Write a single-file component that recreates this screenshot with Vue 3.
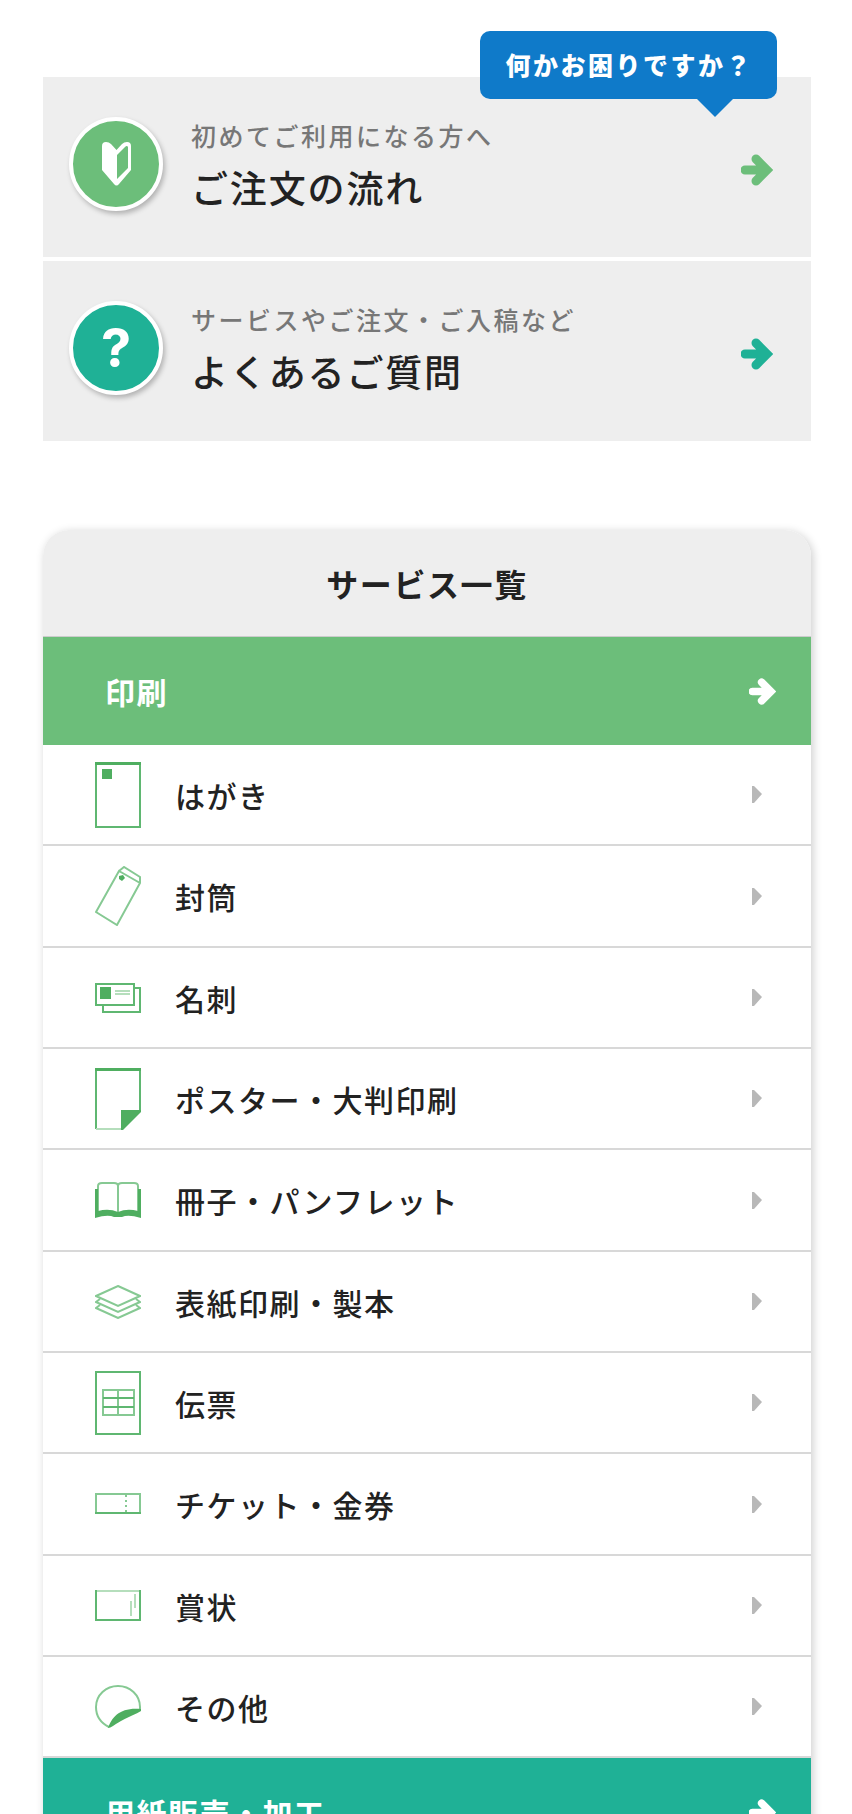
<script setup>
const guides = [
  { kind: 'beginner', lead: '初めてご利用になる方へ', title: 'ご注文の流れ' },
  { kind: 'faq', lead: 'サービスやご注文・ご入稿など', title: 'よくあるご質問' },
]

const services = [
  {
    name: 'はがき', w: 46, h: 66,
    shapes: [
      { t: 'line', d: 'M1 1H45V65H1Z' },
      { t: 'fill', d: 'M0 0H46V3H0ZM7 7H17V17H7Z' },
    ],
  },
  {
    name: '封筒', w: 46, h: 60,
    shapes: [
      { t: 'thin', d: 'M24 5L1 46L22 59L45 17ZM24 5L29 1L45 11V17' },
      { t: 'fill', d: 'M24 10L28 9L30 12L27 15L24 13Z' },
    ],
  },
  {
    name: '名刺', w: 46, h: 30,
    shapes: [
      { t: 'line', d: 'M1 1H39V22H1ZM39 5H45V29H8V23' },
      { t: 'fill', d: 'M5 4H16V16H5Z' },
      { t: 'pale', d: 'M20 8H35M20 11H35' },
    ],
  },
  {
    name: 'ポスター・大判印刷', w: 46, h: 62,
    shapes: [
      { t: 'line', d: 'M27 61V43H45V1H1V61' },
      { t: 'pale', d: 'M1 61H27' },
      { t: 'fill', d: 'M0 0H46V3H0ZM26 42H46V44L28 62H26Z' },
    ],
  },
  {
    name: '冊子・パンフレット', w: 46, h: 36,
    shapes: [
      { t: 'thin', d: 'M3 30V4Q3 1 7 1H19Q23 1 23 4Q23 1 27 1H39Q43 1 43 4V30M23 4V31' },
      { t: 'fill', d: 'M0 7H3V29Q14 26 23 30Q32 26 43 29V7H46V36Q33 32 27 35H19Q13 32 0 36Z' },
    ],
  },
  {
    name: '表紙印刷・製本', w: 46, h: 34,
    shapes: [
      { t: 'thin', d: 'M23 1L45 11L23 21L1 11ZM5 14L1 17L23 27L45 17L41 14M5 20L1 23L23 33L45 23L41 20' },
    ],
  },
  {
    name: '伝票', w: 46, h: 64,
    shapes: [
      { t: 'line', d: 'M1 1H45V63H1Z' },
      { t: 'thin', d: 'M8 19H39V44H8ZM23 19V44' },
      { t: 'line', d: 'M8 27H39M8 36H39' },
    ],
  },
  {
    name: 'チケット・金券', w: 46, h: 22,
    shapes: [
      { t: 'thin', d: 'M1 1H45V20H1ZM31 1V4M31 7V9M31 12V14M31 17V20' },
      { t: 'line', d: 'M0 20H46' },
    ],
  },
  {
    name: '賞状', w: 46, h: 32,
    shapes: [
      { t: 'line', d: 'M1 0V30H45V0' },
      { t: 'pale', d: 'M2 1H44M40 4V18M36 11V26' },
    ],
  },
  {
    name: 'その他', w: 46, h: 44,
    shapes: [
      { t: 'thin', d: 'M14 42C6 38 1 31 1 22C1 10 11 1 23 1C35 1 45 10 45 22V25' },
      { t: 'fill', d: 'M13 43C17 32 25 22 46 24V26Q43 28 36 31Q25 36 18 41Q15 43 13 43Z' },
    ],
  },
]
</script>

<template>
  <main class="page">
    <nav class="guides" aria-label="ご利用案内">
      <p class="bubble">何かお困りですか？</p>
      <a v-for="g in guides" :key="g.kind" href="#" class="guide" :class="g.kind">
        <span class="badge" aria-hidden="true">
          <svg v-if="g.kind === 'beginner'" width="29" height="44" viewBox="0 0 29 44">
            <path
              fill="#fff"
              fill-rule="evenodd"
              d="M0 4Q0 0 4 0Q7 0 9 2L14.500 8L20 2Q22 0 25 0Q29 0 29 4V28L17 42Q14.500 45 12 42L0 28ZM15 13V37L26 26V5Q25 3 23 5Z"
            />
          </svg>
          <span v-else class="mark">?</span>
        </span>
        <span class="copy">
          <span class="lead">{{ g.lead }}</span>
          <span class="title">{{ g.title }}</span>
        </span>
        <svg class="arrow" viewBox="0 0 32 32" aria-hidden="true">
          <path d="M4 16H24M15 5L26 16L15 27" />
        </svg>
      </a>
    </nav>

    <section class="catalog">
      <h2 class="heading">サービス一覧</h2>
      <a href="#" class="category print">
        <span>印刷</span>
        <svg class="arrow small" viewBox="0 0 32 32" aria-hidden="true">
          <path d="M4 16H24M15 5L26 16L15 27" />
        </svg>
      </a>
      <ul class="list">
        <li v-for="s in services" :key="s.name">
          <a href="#" class="item">
            <svg class="icon" :width="s.w" :height="s.h" :viewBox="`0 0 ${s.w} ${s.h}`" aria-hidden="true">
              <path v-for="(p, i) in s.shapes" :key="i" :class="p.t" :d="p.d" />
            </svg>
            <span class="name">{{ s.name }}</span>
            <svg class="chevron" width="10" height="17" viewBox="0 0 10 17" aria-hidden="true">
              <path d="M0 0H2L10 8L2 17H0Z" />
            </svg>
          </a>
        </li>
      </ul>
      <a href="#" class="category paper">
        <span>用紙販売・加工</span>
        <svg class="arrow small" viewBox="0 0 32 32" aria-hidden="true">
          <path d="M4 16H24M15 5L26 16L15 27" />
        </svg>
      </a>
    </section>
  </main>
</template>

<style>
body {
  margin: 0;
  background: #fff;
}
</style>

<style scoped>
.page {
  box-sizing: border-box;
  height: 100vh;
  overflow: hidden;
  padding: 77px 41px 0 43px;
  color: #222;
  font-family: "Noto Sans CJK JP", "Noto Sans", sans-serif;
  font-weight: 500;
}
a {
  color: inherit;
  text-decoration: none;
}
.guides {
  position: relative;
  display: flex;
  flex-direction: column;
  gap: 4px;
}
.guide {
  box-sizing: border-box;
  display: flex;
  align-items: flex-start;
  min-height: 180px;
  padding: 40px 38px 0 26px;
  background: #eee;
}
.badge {
  box-sizing: border-box;
  display: flex;
  align-items: center;
  justify-content: center;
  width: 94px;
  height: 94px;
  border: 4px solid #fff;
  border-radius: 50%;
  box-shadow: 2px 3px 5px rgba(0, 0, 0, 0.25);
}
.beginner .badge { background: #6cbe7a; }
.faq .badge { background: #1fb196; }
.mark {
  color: #fff;
  font: 700 54px/54px Inter, sans-serif;
}
.copy {
  flex: 1;
  display: flex;
  flex-direction: column;
  gap: 8px;
  padding-left: 28px;
}
.lead {
  color: #777;
  font-size: 25px;
  line-height: 36px;
  letter-spacing: 0.1em;
}
.title {
  font-size: 37px;
  line-height: 52px;
  letter-spacing: 0.05em;
}
.arrow {
  width: 32px;
  height: 32px;
  margin-top: 37px;
  fill: none;
  stroke: currentColor;
  stroke-width: 9px;
  stroke-linecap: round;
}
.beginner .arrow { color: #6cbe7a; }
.faq .arrow { color: #1fb196; }
.bubble {
  position: absolute;
  right: 34px;
  bottom: calc(100% - 22px);
  margin: 0;
  padding: 15px 24px 17px 25px;
  border-radius: 10px;
  background: #0f7ac9;
  color: #fff;
  font-size: 25px;
  font-weight: 900;
  line-height: 36px;
  letter-spacing: 0.1em;
}
.bubble::after {
  content: "";
  position: absolute;
  top: 100%;
  right: 44px;
  border: 18px solid transparent;
  border-top-color: #0f7ac9;
  border-bottom: 0;
}
.catalog {
  margin-top: 89px;
  border-radius: 26px 26px 0 0;
  box-shadow: 2px 2px 10px rgba(0, 0, 0, 0.2);
}
.heading {
  margin: 0;
  padding: 30px 0 29px;
  border-bottom: 1px solid #ccc;
  border-radius: 26px 26px 0 0;
  background: #eee;
  font-size: 32px;
  font-weight: 700;
  line-height: 47px;
  letter-spacing: 0.05em;
  text-align: center;
}
.category {
  display: flex;
  align-items: center;
  justify-content: space-between;
  box-sizing: border-box;
  min-height: 108px;
  padding: 0 35px 0 62px;
  color: #fff;
  font-size: 30px;
  font-weight: 700;
  line-height: 44px;
  letter-spacing: 0.05em;
}
.print { background: #6cbe7a; }
.paper { background: #1fb196; }
.small {
  width: 27px;
  height: 27px;
  margin-top: 0;
}
.list {
  margin: 0;
  padding: 0;
  list-style: none;
}
.item {
  box-sizing: border-box;
  display: flex;
  align-items: center;
  min-height: 101px;
  padding: 0 49px 0 52px;
  border-bottom: 2px solid #d8d8d8;
  background: #fff;
}
li:nth-child(3n + 2) .item { min-height: 102px; }
.name {
  flex: 1;
  padding-left: 34px;
  font-size: 30px;
  line-height: 44px;
  letter-spacing: 0.05em;
}
.icon path { fill: none; stroke: none; }
.icon .line { stroke: #5fb771; stroke-width: 2px; }
.icon .thin { stroke: #86c993; stroke-width: 2px; }
.icon .pale { stroke: #b5debc; stroke-width: 2px; }
.icon .fill { fill: #4fae60; }
.chevron { fill: #b8b8b8; }
</style>
